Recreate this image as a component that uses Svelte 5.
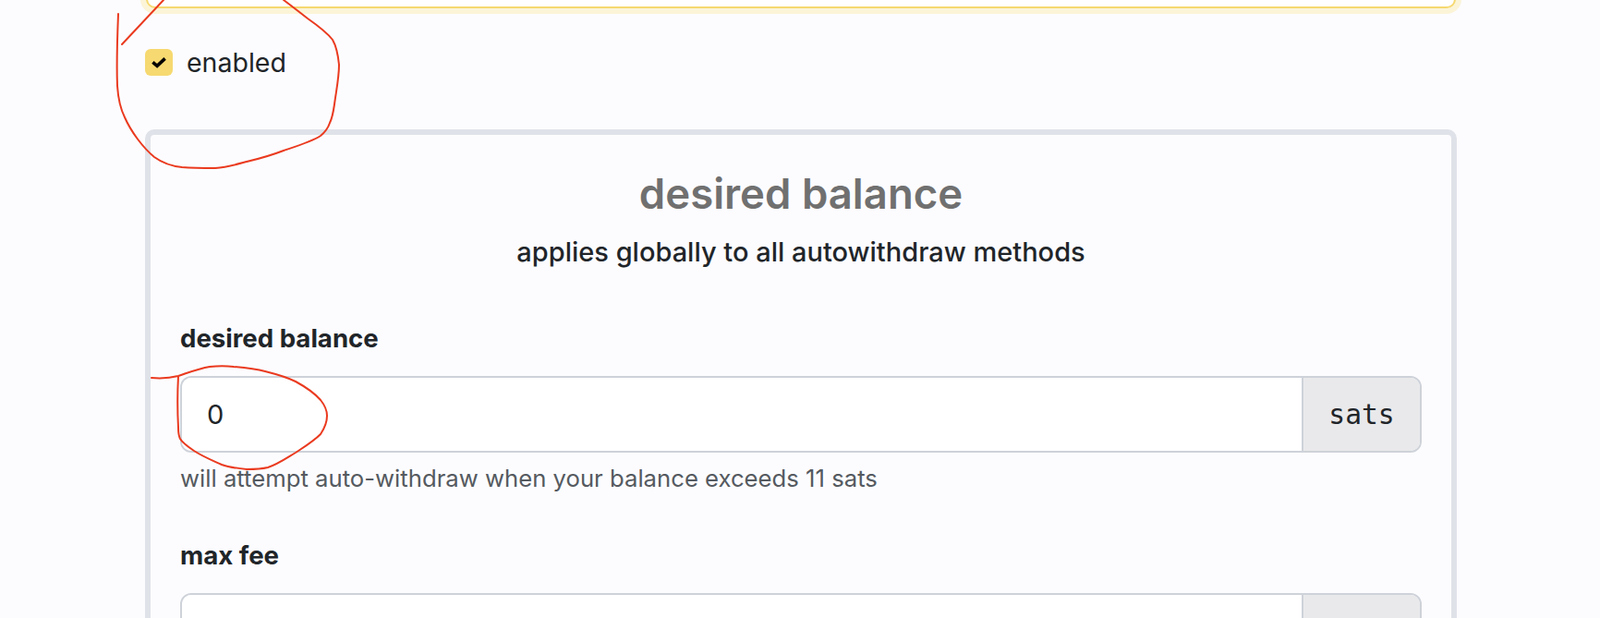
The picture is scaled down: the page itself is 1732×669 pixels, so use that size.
<script>
  let enabled = true;
  let desiredBalance = "0";
  let maxFee = "";
</script>

<div class="page">
  <div class="focused-input"></div>

  <label class="check-row">
    <input type="checkbox" bind:checked={enabled} />
    <span class="check-box">
      <svg viewBox="0 0 16 16" width="22" height="22" aria-hidden="true">
        <path d="M3.2 8.3 6.6 11.2 12.8 5.4" fill="none" stroke="#000" stroke-width="2.6" />
      </svg>
    </span>
    <span class="check-label">enabled</span>
  </label>

  <section class="card">
    <h3>desired balance</h3>
    <h6>applies globally to all autowithdraw methods</h6>

    <div class="field">
      <label for="balance">desired balance</label>
      <div class="input-group">
        <input id="balance" bind:value={desiredBalance} />
        <span class="addon">sats</span>
      </div>
      <small>will attempt auto-withdraw when your balance exceeds 11 sats</small>
    </div>

    <div class="field">
      <label for="fee">max fee</label>
      <div class="input-group">
        <input id="fee" bind:value={maxFee} />
        <span class="addon"></span>
      </div>
    </div>
  </section>

  <!-- hand drawn red circles on top of the screenshot -->
  <svg class="scribble" viewBox="0 0 1732 669" aria-hidden="true">
    <path d="M128 15C127 40 126 70 127 93C128 108 130 117 135 127C142 143 155 160 167 170C178 178 187 180 197 181C210 182 222 182 233 182C246 181 256 178 267 175C280 172 294 168 307 163C322 158 338 153 347 147C352 143 355 139 357 133C360 127 361 120 362 113C364 98 367 84 367 70C366 60 364 50 360 43C353 34 343 27 333 20C324 13 315 6 307 0" />
    <path d="M132 48C147 32 162 16 177 0" />
    <path d="M164 409C175 410 185 409 193 407C205 403 215 399 227 397C236 396 245 396 253 397C265 398 276 399 287 402C299 405 310 408 320 413C331 419 340 425 347 433C351 438 354 444 354 450C354 457 351 464 347 470C339 478 329 484 320 490C310 496 300 503 290 506C282 508 275 508 267 508C257 507 248 506 240 503C229 498 219 494 210 488C204 484 198 480 195 475C193 471 193 467 193 463C192 445 192 425 193 407" />
  </svg>
</div>

<style>
  :global(body) {
    margin: 0;
    background: #fcfcff;
  }

  .page {
    position: relative;
    box-sizing: border-box;
    height: 669px;
    overflow: hidden;
    padding: 0 155px 0 157px;
    font-family: Inter, "Liberation Sans", sans-serif;
    color: #212529;
  }

  .focused-input {
    height: 20px;
    margin: -11px 1px 0;
    box-sizing: border-box;
    background: #fff;
    border: 2px solid #f6d970;
    border-radius: 10px;
    box-shadow: 0 0 0 6px rgba(250, 218, 94, 0.25);
  }

  .check-row {
    display: flex;
    align-items: center;
    height: 30px;
    margin-top: 43px;
    gap: 15px;
  }

  .check-row input {
    display: none;
  }

  .check-box {
    display: flex;
    align-items: center;
    justify-content: center;
    width: 30px;
    height: 29px;
    border-radius: 6px;
    background: #f6d970;
  }

  .check-label {
    font-size: 28.5px;
  }

  .card {
    box-sizing: border-box;
    height: 700px;
    margin-top: 58px;
    padding: 37px 32px 0 32px;
    border: 6px solid #dfe2e8;
    border-radius: 10px;
  }

  h3 {
    margin: 0;
    text-align: center;
    font-size: 45.5px;
    line-height: 53px;
    font-weight: 600;
    color: #707070;
  }

  h6 {
    margin: 21px 0 0;
    text-align: center;
    font-size: 29px;
    line-height: 32px;
    font-weight: 500;
  }

  .field {
    margin-top: 61px;
  }

  .field + .field {
    margin-top: 53px;
  }

  .field label {
    display: block;
    font-size: 27.6px;
    line-height: 32px;
    font-weight: 700;
    margin-bottom: 25px;
  }

  .input-group {
    display: flex;
    height: 83px;
    box-sizing: border-box;
    border: 2px solid #ced2d9;
    border-radius: 12px;
    overflow: hidden;
  }

  .input-group input {
    flex: 1;
    min-width: 0;
    border: 0;
    outline: 0;
    padding: 0 27px;
    background: #fff;
    font-family: Inter, "Liberation Sans", sans-serif;
    font-size: 29px;
    color: #212529;
  }

  .addon {
    display: flex;
    align-items: center;
    justify-content: center;
    width: 126px;
    border-left: 2px solid #ced2d9;
    background: #e9e9eb;
    font-family: "DejaVu Sans Mono", monospace;
    font-size: 29.6px;
  }

  small {
    display: block;
    margin-top: 14px;
    font-size: 25.7px;
    line-height: 28px;
    color: #555a60;
  }

  .scribble {
    position: absolute;
    left: 0;
    top: 0;
    width: 1732px;
    height: 669px;
    pointer-events: none;
  }

  .scribble path {
    fill: none;
    stroke: #ea3a1f;
    stroke-width: 2;
    stroke-linecap: round;
  }
</style>
